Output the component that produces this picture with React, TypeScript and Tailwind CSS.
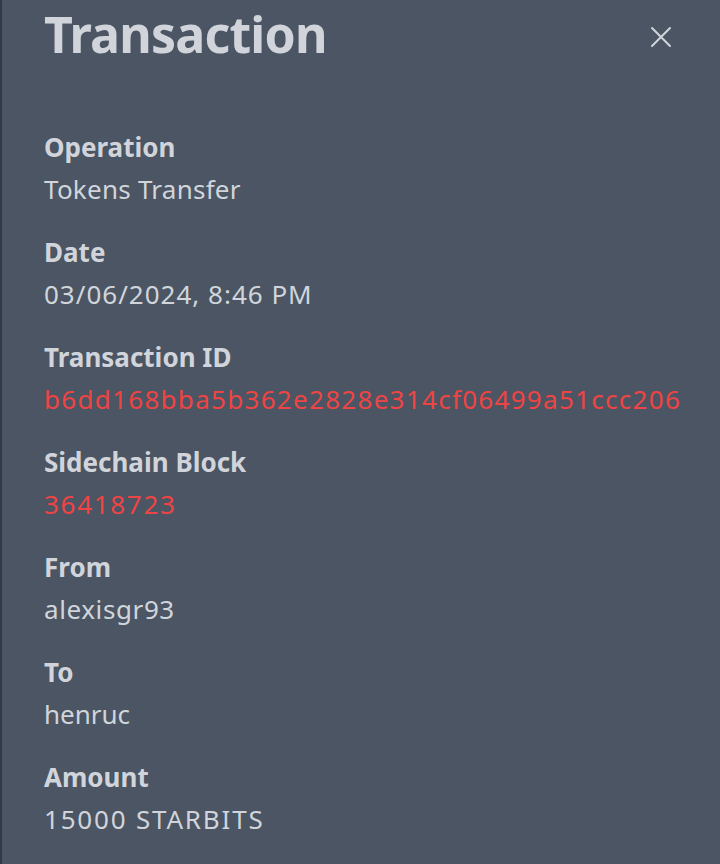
import React from "react";

const items: { label: string; value: string; red?: boolean; track: string }[] = [
  { label: "Operation", value: "Tokens Transfer", track: "tracking-[0.25px]" },
  { label: "Date", value: "03/06/2024, 8:46 PM", track: "tracking-[1px]" },
  { label: "Transaction ID", value: "b6dd168bba5b362e2828e314cf06499a51ccc206", red: true, track: "tracking-[1.3px]" },
  { label: "Sidechain Block", value: "36418723", red: true, track: "tracking-[1.7px]" },
  { label: "From", value: "alexisgr93", track: "tracking-[0.6px]" },
  { label: "To", value: "henruc", track: "tracking-[0px]" },
  { label: "Amount", value: "15000 STARBITS", track: "tracking-[1.8px]" },
];

export default function App() {
  return (
    <div
      className="min-h-screen w-[720px] h-[864px] overflow-hidden bg-[#4b5563] border-l-2 border-[#323a48] text-[#d1d5db]"
      style={{ fontFamily: '"Noto Sans", "Open Sans", sans-serif' }}
    >
      <div className="flex items-start justify-between pl-[42px] pr-[48px]">
        <h1 className="text-[50px] leading-[64px] pt-[2px] h-[64px] font-bold tracking-[-0.8px]">Transaction</h1>
        <button className="mt-[26px] w-[22px] h-[22px] flex items-center justify-center text-[#d1d5db]">
          <svg width="22" height="22" viewBox="0 0 22 22" fill="none" stroke="currentColor" strokeWidth="2" strokeLinecap="round">
            <path d="M2 2L20 20M20 2L2 20" />
          </svg>
        </button>
      </div>
      <div className="flex flex-col gap-[21px] pl-[42px] mt-[62px]">
        {items.map((it) => (
          <div key={it.label} className="flex flex-col">
            <div className="text-[26px] leading-[42px] font-bold">{it.label}</div>
            <div className={`text-[26px] leading-[42px] ${it.track} ${it.red ? "text-[#ef4444]" : "text-[#d1d5db]"}`}>{it.value}</div>
          </div>
        ))}
      </div>
    </div>
  );
}
